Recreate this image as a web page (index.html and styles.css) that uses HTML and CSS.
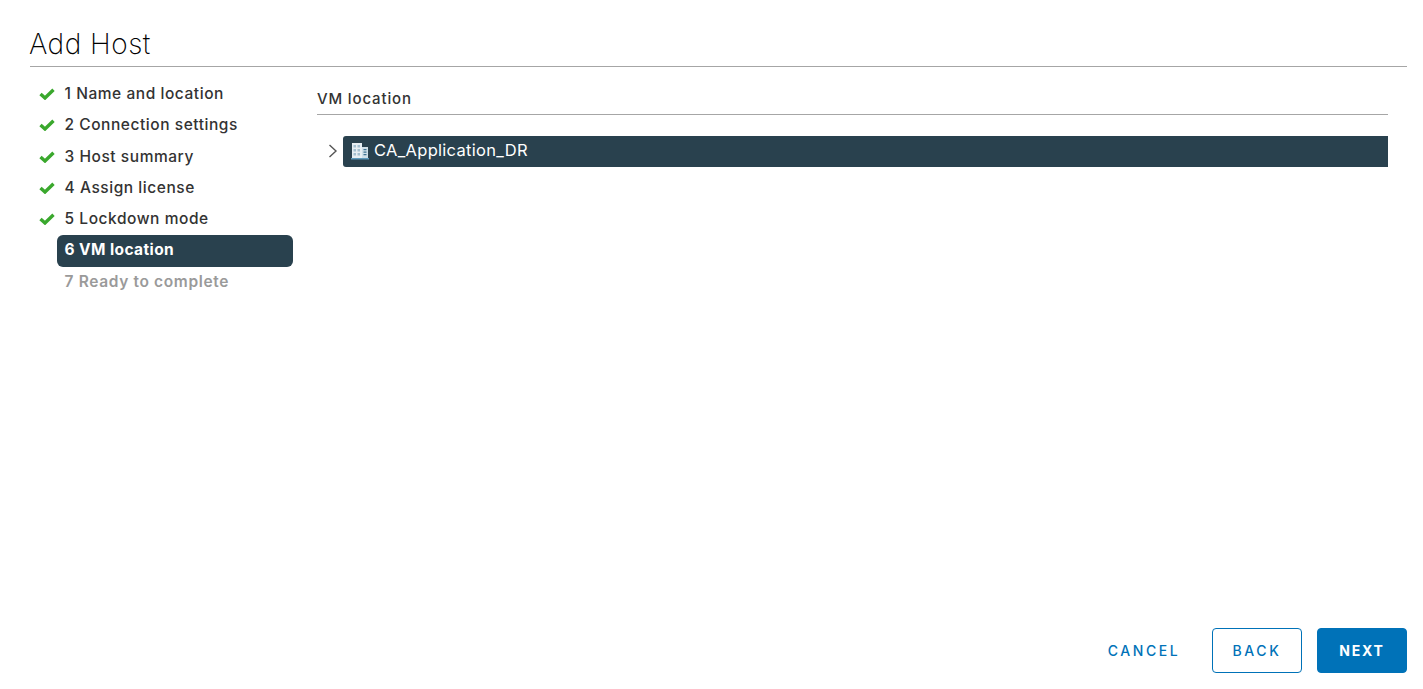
FILE: index.html
```html
<!DOCTYPE html>
<html lang="en">
<head>
<meta charset="utf-8">
<title>Add Host</title>
<link rel="stylesheet" href="styles.css">
</head>
<body>
<div class="wizard">
  <header class="head"><h1 class="title">Add Host</h1></header>
  <div class="main">
    <nav class="steps">
      <div class="step"><svg class="check" viewBox="0 0 16 12"><path d="M1.500 6 6 10 14.500 1.800"/></svg><span class="label">1 Name and location</span></div>
      <div class="step"><svg class="check" viewBox="0 0 16 12"><path d="M1.500 6 6 10 14.500 1.800"/></svg><span class="label">2 Connection settings</span></div>
      <div class="step"><svg class="check" viewBox="0 0 16 12"><path d="M1.500 6 6 10 14.500 1.800"/></svg><span class="label">3 Host summary</span></div>
      <div class="step"><svg class="check" viewBox="0 0 16 12"><path d="M1.500 6 6 10 14.500 1.800"/></svg><span class="label">4 Assign license</span></div>
      <div class="step"><svg class="check" viewBox="0 0 16 12"><path d="M1.500 6 6 10 14.500 1.800"/></svg><span class="label">5 Lockdown mode</span></div>
      <div class="step active"><span class="label">6 VM location</span></div>
      <div class="step disabled"><span class="label">7 Ready to complete</span></div>
    </nav>
    <section class="content">
      <h2 class="section-title">VM location</h2>
      <div class="tree-row">
        <svg class="caret" viewBox="0 0 10 14"><path d="M1.500 1 8 7 1.500 13"/></svg>
        <div class="tree-node">
          <svg class="dc" viewBox="0 0 18 18">
            <rect x="1" y="1" width="10" height="15" fill="#e6eef3"/>
            <path d="M2.500 3h2.500v2.500H2.500zM6.500 3H9v2.500H6.500zM2.500 7h2.500v2.500H2.500zM6.500 7H9v2.500H6.500zM2.500 11h2.500v2.500H2.500zM6.500 11H9v2.500H6.500z" fill="#a3bfd0"/>
            <rect x="11" y="5" width="6" height="11" fill="#cfdfe8"/>
            <path d="M12.500 7h3v1.200h-3zM12.500 9.500h3v1.200h-3zM12.500 12h3v1.200h-3z" fill="#3f7391"/>
            <rect x="0" y="16" width="18" height="1.500" fill="#5f9bbd"/>
          </svg>
          <span>CA_Application_DR</span>
        </div>
      </div>
    </section>
  </div>
  <footer class="foot">
    <button class="btn link">CANCEL</button>
    <button class="btn outline">BACK</button>
    <button class="btn primary">NEXT</button>
  </footer>
</div>
</body>
</html>
```
FILE: styles.css
```css
* { box-sizing: border-box; }
html, body { height: 100%; }
body {
  margin: 0;
  background: #fff;
  color: #333;
  font-family: Inter, "Open Sans", sans-serif;
}
.wizard {
  height: 689px;
  display: flex;
  flex-direction: column;
  padding: 0 16px 16px 29px;
}
.head {
  height: 67px;
  margin-left: 1px;
  border-bottom: 1px solid #a6a6a6;
  padding-top: 27px;
}
.title {
  margin: 0 0 0 -1px;
  font-size: 28px;
  line-height: 34px;
  font-weight: 200;
  letter-spacing: 0.5px;
  color: #000;
}
.main { flex: 1; display: flex; min-height: 0; margin-left: 1px; }
.steps {
  width: 263px;
  padding-top: 11px;
  display: flex;
  flex-direction: column;
}
.step {
  height: 31.25px;
  display: flex;
  align-items: center;
  position: relative;
  margin-left: 27px;
  padding-left: 7.500px;
  font-size: 15.500px;
  font-weight: 450;
  letter-spacing: 0.55px;
  color: #333;
}
.label { white-space: nowrap; }
.check {
  position: absolute;
  left: -18px;
  top: 10px;
  width: 16px;
  height: 12px;
  fill: none;
  stroke: #3aa82d;
  stroke-width: 3.400;
}
.active {
  background: #29414e;
  color: #fff;
  font-weight: 700;
  border-radius: 6px;
  margin-top: 1px;
  margin-bottom: -1px;
  padding-bottom: 2px;
  letter-spacing: 0.4px;
}
.disabled { color: #9a9a9a; font-weight: 600; letter-spacing: 0.65px; }
.content { flex: 1; padding-top: 21px; margin-right: 19px; margin-left: 24px; }
.section-title {
  margin: 0;
  height: 27px;
  font-size: 15px;
  line-height: 22px;
  font-weight: 450;
  letter-spacing: 0.85px;
  color: #333;
  border-bottom: 1px solid #a6a6a6;
}
.tree-row { display: flex; align-items: center; margin-top: 21px; }
.caret {
  width: 10px;
  height: 14px;
  margin-left: 11px;
  margin-right: 5px;
  margin-bottom: 2px;
  fill: none;
  stroke: #555;
  stroke-width: 1.400;
}
.tree-node {
  flex: 1;
  height: 31px;
  background: #29414e;
  color: #fff;
  border-radius: 3px 0 0 3px;
  display: flex;
  align-items: center;
  gap: 5px;
  padding-left: 8px;
  padding-bottom: 3px;
  font-size: 16.500px;
  letter-spacing: 0.3px;
}
.dc { width: 18px; height: 18px; margin-top: 1px; }
.foot {
  display: flex;
  justify-content: flex-end;
  gap: 15px;
  height: 45px;
}
.btn {
  width: 90px;
  height: 45px;
  border-radius: 4px;
  border: 1px solid #0072b8;
  font-family: Inter, "Open Sans", sans-serif;
  font-size: 14px;
  letter-spacing: 2.600px;
  font-weight: 450;
  padding: 0;
}
.link { border-color: transparent; background: none; color: #0072b8; margin-right: 8px; }
.outline { background: #fff; color: #0072b8; }
.primary { background: #0072b8; color: #fff; font-weight: 700; letter-spacing: 1.800px; }
```
